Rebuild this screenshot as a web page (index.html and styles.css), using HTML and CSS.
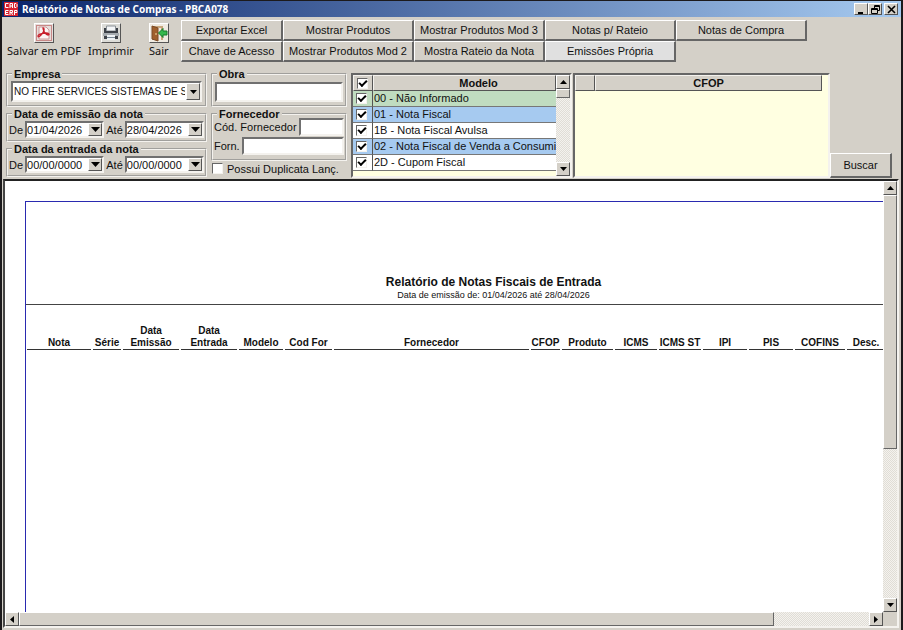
FILE: index.html
```html
<!DOCTYPE html>
<html lang="pt-BR">
<head>
    <meta charset="UTF-8">
    <meta name="viewport" content="width=device-width, initial-scale=1.0">
    <title>Relatório de Notas de Compras - PBCA078</title>
    <link rel="stylesheet" href="styles.css">
</head>
<body>
    <header class="titlebar">
        <svg class="app-icon" width="14" height="14" viewBox="0 0 14 14" fill="none" stroke="#fff">
            <rect width="14" height="14" fill="#d8232f" stroke="none"/>
            <path d="M4.500 1.500H1.500V5.500H4.500M6 6V1.500H8.500V6M6 4H8.500M10.500 1.500V5.500H12L13 4.500V2.500L12 1.500Z"/>
            <path d="M4.500 8.500H1.500V12.500H4.500M1.500 10.500H4M6 13V8.500H8.500V10.500H6M7.500 10.500L8.500 13M10.500 13V8.500H13V10.500H10.500"/>
        </svg>
        <h1>Relatório de Notas de Compras - PBCA078</h1>
        <div class="window-buttons">
            <button class="win-btn" aria-label="Minimizar"><svg width="9" height="9" viewBox="0 0 9 9"><path d="M1 7h5v2H1z"/></svg></button>
            <button class="win-btn" aria-label="Restaurar"><svg width="9" height="9" viewBox="0 0 9 9" fill="none" stroke="#000"><path d="M3.500 3V.500H8.500V5.500H6.500M3 1.500H9M.500 3.500H6.500V8.500H.500ZM0 4.500H7"/></svg></button>
            <button class="win-btn close" aria-label="Fechar"><svg width="9" height="9" viewBox="0 0 9 9"><path d="M1 1l7 7M8 1L1 8" stroke="#000" stroke-width="1.600"/></svg></button>
        </div>
    </header>

    <nav class="toolbar">
        <div class="actions">
            <button class="action">
                <span class="action-icon">
                    <svg width="18" height="18" viewBox="0 0 18 18" fill="none">
                        <rect width="18" height="18" fill="#e6dedb"/>
                        <rect x="1.500" y="1.500" width="15" height="15" stroke="#a33" stroke-dasharray="1 1"/>
                        <path d="M4 3h7l3 3v9H4z" fill="#fbf5f4" stroke="#c99"/>
                        <path d="M8 4c2 0 1 4-1 6s-4 4-4 2 5-3 8-3 4 2 2 2-5-4-5-7z" stroke="#c8202c" stroke-width="1.300"/>
                    </svg>
                </span>
                Salvar em PDF
            </button>
            <button class="action">
                <span class="action-icon">
                    <svg width="18" height="18" viewBox="0 0 18 18">
                        <rect width="18" height="18" fill="#dcdcd8"/>
                        <path d="M4.500 2h9v5h-9z" fill="#f4f6f8" stroke="#8a9096"/>
                        <path d="M2 4h2v3h10V4h2v6H2z" fill="#3c4148"/>
                        <path d="M1 9h16v3H1z" fill="#a5abb0"/>
                        <path d="M2 12h14v3H2z" fill="#3c4148"/>
                        <path d="M5 11h8v5H5z" fill="#eef2f5"/>
                        <path d="M5 13.500h8" stroke="#7b8a98"/>
                    </svg>
                </span>
                Imprimir
            </button>
            <button class="action">
                <span class="action-icon">
                    <svg width="18" height="18" viewBox="0 0 18 18">
                        <rect width="18" height="18" fill="#f0ebe2"/>
                        <path d="M2 2h11v14h-2V4H4v12H2z" fill="#c9a67c"/>
                        <path d="M2 2l6 2v13l-6-2z" fill="#a0602c" stroke="#7a4a26"/>
                        <path d="M6 9v2" stroke="#f3d9a0"/>
                        <path d="M8.500 9l4.500-4.500V7h4v4h-4v2.500z" fill="#35b84c" stroke="#147a2a"/>
                    </svg>
                </span>
                Sair
            </button>
        </div>
        <div class="reports">
            <button class="btn">Exportar Excel</button>
            <button class="btn">Mostrar Produtos</button>
            <button class="btn">Mostrar Produtos Mod 3</button>
            <button class="btn">Notas p/ Rateio</button>
            <button class="btn">Notas de Compra</button>
            <button class="btn">Chave de Acesso</button>
            <button class="btn">Mostrar Produtos Mod 2</button>
            <button class="btn">Mostra Rateio da Nota</button>
            <button class="btn active">Emissões Própria</button>
        </div>
    </nav>

    <form class="filters" onsubmit="return false">
        <div class="filter-col dates">
            <fieldset class="tall">
                <legend><label for="empresa">Empresa</label></legend>
                <div class="field combo">
                    <select id="empresa">
                        <option>NO FIRE SERVICES SISTEMAS DE SEGURANCA</option>
                    </select>
                    <span class="drop"><svg width="7" height="4" viewBox="0 0 7 4"><path d="M0 0h7L3.500 4z"/></svg></span>
                </div>
            </fieldset>
            <fieldset>
                <legend>Data de emissão da nota</legend>
                <div class="date-row">
                    <label for="emissaoDe">De</label>
                    <div class="field date"><input type="text" id="emissaoDe" value="01/04/2026"><button class="drop" aria-label="Abrir calendário"><svg width="9" height="5" viewBox="0 0 9 5"><path d="M0 0h9L4.500 5z"/></svg></button></div>
                    <label for="emissaoAte">Até</label>
                    <div class="field date"><input type="text" id="emissaoAte" value="28/04/2026"><button class="drop" aria-label="Abrir calendário"><svg width="9" height="5" viewBox="0 0 9 5"><path d="M0 0h9L4.500 5z"/></svg></button></div>
                </div>
            </fieldset>
            <fieldset>
                <legend>Data da entrada da nota</legend>
                <div class="date-row">
                    <label for="entradaDe">De</label>
                    <div class="field date"><input type="text" id="entradaDe" value="00/00/0000"><button class="drop" aria-label="Abrir calendário"><svg width="9" height="5" viewBox="0 0 9 5"><path d="M0 0h9L4.500 5z"/></svg></button></div>
                    <label for="entradaAte">Até</label>
                    <div class="field date"><input type="text" id="entradaAte" value="00/00/0000"><button class="drop" aria-label="Abrir calendário"><svg width="9" height="5" viewBox="0 0 9 5"><path d="M0 0h9L4.500 5z"/></svg></button></div>
                </div>
            </fieldset>
        </div>

        <div class="filter-col supplier">
            <fieldset class="tall">
                <legend><label for="obra">Obra</label></legend>
                <div class="field single"><input type="text" id="obra"></div>
            </fieldset>
            <fieldset class="supplier-box">
                <legend>Fornecedor</legend>
                <div class="text-row">
                    <label for="codForn">Cód. Fornecedor</label>
                    <div class="field"><input type="text" id="codForn"></div>
                </div>
                <div class="text-row">
                    <label for="forn">Forn.</label>
                    <div class="field"><input type="text" id="forn"></div>
                </div>
            </fieldset>
            <label class="check-line"><input type="checkbox" class="check"> Possui Duplicata Lanç.</label>
        </div>

        <div class="grid-box modelo">
            <table class="grid">
                <thead>
                    <tr><th class="tick"><input type="checkbox" class="check" aria-label="Marcar todos" checked></th><th class="wide">Modelo</th></tr>
                </thead>
                <tbody>
                    <tr class="green"><td class="tick"><input type="checkbox" class="check" id="m00" checked></td><td><label for="m00">00 - Não Informado</label></td></tr>
                    <tr class="blue"><td class="tick"><input type="checkbox" class="check" id="m01" checked></td><td><label for="m01">01 - Nota Fiscal</label></td></tr>
                    <tr><td class="tick"><input type="checkbox" class="check" id="m1b" checked></td><td><label for="m1b">1B - Nota Fiscal Avulsa</label></td></tr>
                    <tr class="blue"><td class="tick"><input type="checkbox" class="check" id="m02" checked></td><td><label for="m02">02 - Nota Fiscal de Venda a Consumidor</label></td></tr>
                    <tr><td class="tick"><input type="checkbox" class="check" id="m2d" checked></td><td><label for="m2d">2D - Cupom Fiscal</label></td></tr>
                </tbody>
            </table>
            <div class="scroll vertical">
                <button class="arrow" aria-label="Subir"><svg width="7" height="4" viewBox="0 0 7 4"><path d="M0 4h7L3.500 0z"/></svg></button>
                <div class="thumb small"></div>
                <button class="arrow end" aria-label="Descer"><svg width="7" height="4" viewBox="0 0 7 4"><path d="M0 0h7L3.500 4z"/></svg></button>
            </div>
        </div>

        <div class="grid-box cfop">
            <table class="grid">
                <thead>
                    <tr><th class="tick"></th><th>CFOP</th></tr>
                </thead>
            </table>
        </div>

        <button class="btn search">Buscar</button>
    </form>

    <main class="viewer">
        <div class="canvas">
            <article class="paper">
                <div class="paper-head">
                    <h2>Relatório de Notas Fiscais de Entrada</h2>
                    <p>Data de emissão de: 01/04/2026 até 28/04/2026</p>
                </div>
                <table class="report">
                    <colgroup>
                        <col class="w-nota"><col class="w-serie"><col class="w-data"><col class="w-data"><col class="w-modelo"><col class="w-cod"><col class="w-forn"><col class="w-cfop"><col class="w-prod"><col class="w-icms"><col class="w-icms"><col class="w-imp"><col class="w-imp"><col class="w-cofins"><col class="w-desc">
                    </colgroup>
                    <thead>
                        <tr>
                            <th>Nota</th>
                            <th>Série</th>
                            <th>Data<br>Emissão</th>
                            <th>Data<br>Entrada</th>
                            <th>Modelo</th>
                            <th>Cod For</th>
                            <th>Fornecedor</th>
                            <th>CFOP</th>
                            <th>Produto</th>
                            <th>ICMS</th>
                            <th>ICMS ST</th>
                            <th>IPI</th>
                            <th>PIS</th>
                            <th>COFINS</th>
                            <th>Desc.</th>
                        </tr>
                    </thead>
                </table>
            </article>
        </div>
        <div class="scroll vertical">
            <button class="arrow" aria-label="Subir"><svg width="7" height="4" viewBox="0 0 7 4"><path d="M0 4h7L3.500 0z"/></svg></button>
            <div class="thumb page-y"></div>
            <button class="arrow end" aria-label="Descer"><svg width="7" height="4" viewBox="0 0 7 4"><path d="M0 0h7L3.500 4z"/></svg></button>
        </div>
        <div class="scroll horizontal">
            <button class="arrow" aria-label="Esquerda"><svg width="4" height="7" viewBox="0 0 4 7"><path d="M4 0v7L0 3.500z"/></svg></button>
            <div class="thumb page-x"></div>
            <button class="arrow end" aria-label="Direita"><svg width="4" height="7" viewBox="0 0 4 7"><path d="M0 0v7l4-3.500z"/></svg></button>
        </div>
    </main>
</body>
</html>
```
FILE: styles.css
```css
* {
    box-sizing: border-box;
}

body {
    display: flex;
    flex-direction: column;
    height: 100vh;
    margin: 0;
    border: 1px solid #1c1a1c;
    border-width: 1px 2px 0 2px;
    background: #d4d0c8;
    color: #111;
    font-family: "Liberation Sans", Arial, sans-serif;
    font-size: 11px;
    line-height: 14px;
    overflow: hidden;
}

button, input, select {
    margin: 0;
    padding: 0;
    border: 0;
    border-radius: 0;
    background: none;
    color: inherit;
    font: inherit;
}

/* title bar */
.titlebar {
    display: flex;
    align-items: center;
    gap: 4px;
    height: 16px;
    padding: 0 3px 0 2px;
    background: linear-gradient(to right, #0a246a, #a6caf0);
    color: #fff;
}

.titlebar h1 {
    flex: 1;
    margin: 0;
    font-family: "Noto Sans", sans-serif;
    font-size: 10px;
    line-height: 16px;
}

.window-buttons {
    display: flex;
}

.win-btn, .arrow, .drop {
    display: flex;
    align-items: center;
    justify-content: center;
    border: 1px solid;
    border-color: #fff #555 #555 #fff;
    background: #d4d0c8;
}

.win-btn {
    width: 14px;
    height: 12px;
}

.win-btn.close {
    margin-left: 2px;
}

/* toolbar */
.toolbar {
    display: flex;
    height: 49px;
    padding: 3px 0 0 5px;
}

.actions {
    display: flex;
    align-items: flex-start;
    gap: 7px;
    width: 174px;
    padding-top: 3px;
}

.action {
    display: flex;
    flex-direction: column;
    align-items: center;
    gap: 1px;
    font-family: "Noto Sans", sans-serif;
    white-space: nowrap;
}

.action:last-child {
    margin-left: 8px;
}

.action-icon {
    height: 20px;
    border: 1px solid;
    border-color: #fff #555 #555 #fff;
}

.action-icon svg {
    display: block;
}

.reports {
    display: grid;
    grid-template-columns: 102px repeat(4, 131px);
    grid-auto-rows: 21px;
    align-content: start;
}

.btn {
    border: 1px solid;
    border-color: #fff #666 #666 #fff;
    border-right-width: 2px;
    border-bottom-width: 2px;
    background: #d4d0c8;
    white-space: nowrap;
}

.btn.active {
    background: #e0e0e0;
}

/* filters */
.filters {
    display: flex;
    height: 113px;
    padding: 1px 0 0 4px;
}

.filter-col {
    flex: none;
    display: flex;
    flex-direction: column;
}

.dates {
    width: 201px;
    margin-right: 4px;
}

.supplier {
    width: 136px;
    margin-right: 4px;
}

fieldset {
    height: 35px;
    min-width: 0;
    margin: 0;
    padding: 0 1px;
    border: 2px groove #f4f2ee;
}

fieldset.tall {
    height: 40px;
}

.supplier-box {
    height: 54px;
}

legend {
    margin-left: 3px;
    padding: 0 2px;
    font-weight: bold;
    line-height: 14px;
}

.field {
    display: flex;
    border: 2px solid;
    border-color: #707070 #f4f2ee #f4f2ee #707070;
    background: #fff;
}

.field input {
    flex: 1;
    width: 0;
}

.combo {
    position: relative;
    height: 21px;
    margin: 0 2px;
}

.combo select {
    width: 100%;
    padding: 0 15px 0 1px;
    font-size: 10px;
    appearance: none;
}

.combo .drop {
    position: absolute;
    right: 0;
    top: 0;
    bottom: 0;
    width: 14px;
    pointer-events: none;
}

.single {
    height: 20px;
    margin: 1px 1px 0;
}

.date-row, .text-row {
    display: flex;
    align-items: center;
    gap: 2px;
}

.date {
    flex: 1;
    height: 17px;
}

.date .drop {
    width: 14px;
}

.text-row {
    margin-top: -3px;
}

.text-row .field {
    flex: 1;
    height: 18px;
}

.text-row + .text-row {
    margin-top: 1px;
}

.check-line {
    display: flex;
    align-items: center;
    gap: 4px;
    height: 15px;
    padding-left: 1px;
}

.check {
    flex: none;
    display: block;
    width: 11px;
    height: 11px;
    border: 1px solid;
    border-color: #666 #f4f2ee #f4f2ee #666;
    background: #fff;
    appearance: none;
}

.check:checked::before {
    content: "";
    display: block;
    width: 6px;
    height: 3px;
    margin: 1px;
    border: solid #000;
    border-width: 0 0 2px 2px;
    transform: rotate(-45deg);
}

/* list grids */
.grid-box {
    display: flex;
    align-items: flex-start;
    height: 105px;
    margin-top: 6px;
    border: 2px solid;
    border-color: #666 #f4f2ee #f4f2ee #666;
    background: #ffffe1;
}

.modelo {
    flex: none;
    width: 221px;
    margin-right: 1px;
}

.cfop {
    flex: none;
    width: 257px;
    padding-right: 6px;
}

.grid {
    flex: 1;
    width: 0;
    table-layout: fixed;
    border-collapse: separate;
    border-spacing: 0;
}

.grid th {
    height: 16px;
    padding: 0;
    border: 1px solid;
    border-color: #f4f2ee #555 #555 #f4f2ee;
    background: #d4d0c8;
}

.grid .wide {
    padding-left: 28px;
}

.grid td {
    height: 16px;
    padding: 0 0 0 1px;
    border-bottom: 1px solid #777;
    background: #fff;
    line-height: 15px;
    white-space: nowrap;
    overflow: hidden;
}

.grid .tick {
    width: 20px;
    padding: 0 0 0 3px;
    border-right: 1px solid #555;
}

.grid .green td {
    background: #c0dcc0;
}

.grid .blue td {
    background: #a6caf0;
}

.search {
    flex: none;
    align-self: flex-end;
    width: 62px;
    height: 25px;
    margin-bottom: 1px;
}

/* scroll bars */
.scroll {
    display: flex;
    background: repeating-conic-gradient(#f4f2ee 0 25%, #e0ddd6 0 50%) 0 0 / 2px 2px;
}

.scroll.vertical {
    flex-direction: column;
    align-self: stretch;
    width: 14px;
}

.arrow {
    flex: none;
    width: 14px;
    height: 14px;
}

.arrow.end {
    margin-top: auto;
}

.horizontal .arrow.end {
    margin-top: 0;
    margin-left: auto;
}

.thumb {
    border: 1px solid;
    border-color: #fff #666 #666 #fff;
    background: #d4d0c8;
}

.thumb.small {
    height: 9px;
}

.thumb.page-y {
    height: 59%;
}

.thumb.page-x {
    width: 86%;
}

/* report preview */
.viewer {
    flex: 1;
    display: grid;
    grid-template: minmax(0, 1fr) 14px / minmax(0, 1fr) 14px;
    min-height: 0;
    margin: 0 2px 2px 1px;
    border: 2px solid;
    border-color: #222 #f4f2ee #f4f2ee #444;
}

.canvas {
    padding: 20px 0 0 20px;
    background: #fff;
    overflow: hidden;
}

.paper {
    width: 937px;
    height: 1000px;
    border: 1px solid #2a2ab0;
}

.paper-head {
    height: 103px;
    padding-top: 73px;
    border-bottom: 1px solid #444;
    text-align: center;
}

.paper-head h2 {
    margin: 0;
    font-size: 12px;
    line-height: 14px;
}

.paper-head p {
    margin: 0;
    font-size: 9px;
    line-height: 12px;
}

.report {
    width: 860px;
    margin: 18px 0 0 -1px;
    table-layout: fixed;
    border-collapse: separate;
    border-spacing: 2px;
    font-size: 10px;
    line-height: 12px;
}

.report th {
    padding: 0;
    border-bottom: 1px solid #333;
    vertical-align: bottom;
    white-space: nowrap;
}

.w-nota { width: 64px; }
.w-serie { width: 28px; }
.w-data { width: 56px; }
.w-modelo { width: 44px; }
.w-cod { width: 47px; }
.w-forn { width: 195px; }
.w-cfop { width: 29px; }
.w-prod { width: 51px; }
.w-icms { width: 42px; }
.w-imp { width: 44px; }
.w-cofins { width: 50px; }
.w-desc { width: 38px; }
```
